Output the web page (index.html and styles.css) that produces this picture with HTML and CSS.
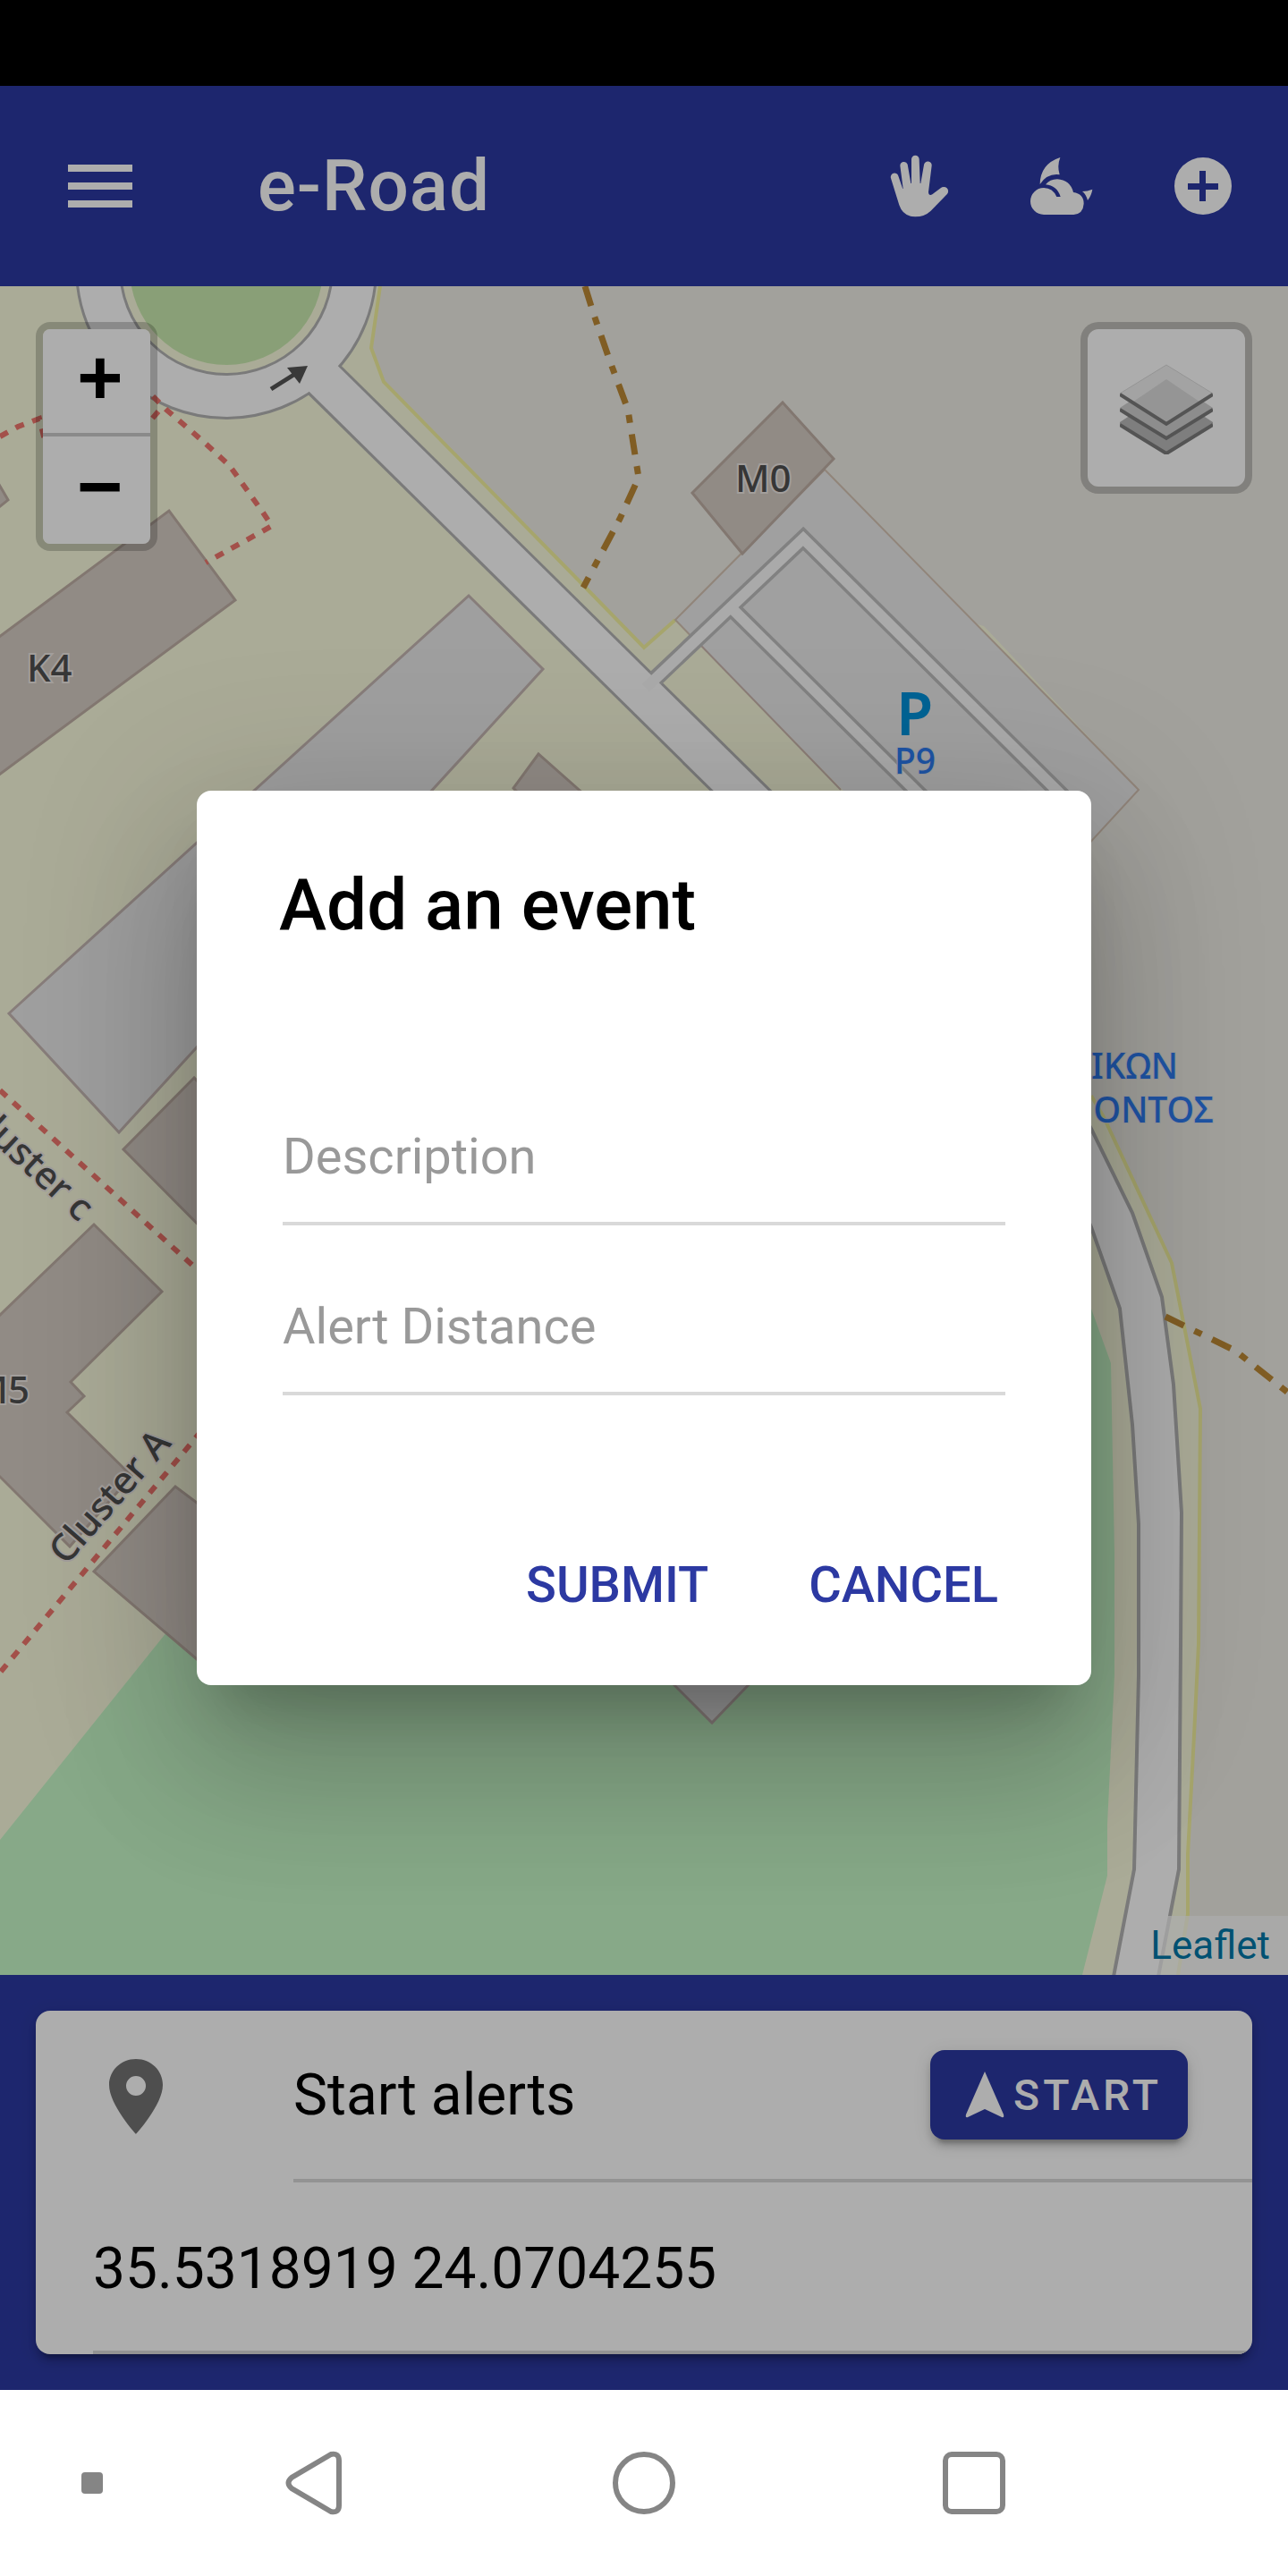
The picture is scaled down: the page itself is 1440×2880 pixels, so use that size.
FILE: index.html
```html
<!DOCTYPE html>
<html lang="en">
<head>
<meta charset="utf-8">
<meta name="viewport" content="width=device-width, initial-scale=1">
<title>e-Road</title>
<link rel="stylesheet" href="styles.css">
</head>
<body>
<div class="status-bar"></div>
<div class="app">
  <header class="toolbar">
    <button class="icon-button" aria-label="Menu">
      <svg class="icon" viewBox="0 0 72 72" fill="currentColor"><path d="M0 12h72v8H0zM0 32h72v8H0zM0 52h72v8H0z"/></svg>
    </button>
    <h1 class="toolbar-title">e-Road</h1>
    <div class="toolbar-actions">
      <button class="icon-button" aria-label="Hand">
        <svg class="icon" viewBox="100 96 216 216" fill="currentColor"><path d="M109 178A13 13 0 0 1 134 170L149 214L150 212L140 136A13 13 0 0 1 165 131L176 195H178V114A13 13 0 0 1 204 114L207 195H209L220 133A13 13 0 0 1 246 136L235 224Q236 238 248 232L276 211A14 14 0 0 1 297 232L243 287Q222 307 191 307Q150 307 137 268Z"/></svg>
      </button>
      <button class="icon-button" aria-label="Night weather">
        <svg class="icon" viewBox="572 96 216 216" fill="currentColor"><path d="M675 108Q664 137 673 166Q632 160 607 198Q608 130 675 108ZM749 222Q766 222 783 215Q780 235 767 252Q762 232 749 222ZM620 300A45 45 0 0 1 620 210Q650 210 663 240H676Q664 202 626 199Q640 181 665 181Q708 183 719 225Q754 230 754 263Q752 297 720 300Z"/></svg>
      </button>
      <button class="icon-button" aria-label="Add event">
        <svg class="icon" viewBox="0 0 72 72" fill="currentColor"><path fill-rule="evenodd" d="M36 4a32 32 0 1 0 0 64a32 32 0 1 0 0-64zM32 19h7v14h14v7H39v13h-7V40H19v-7h13z"/></svg>
      </button>
    </div>
  </header>

  <main class="map">
    <svg class="map-canvas" viewBox="0 320 1440 1888" preserveAspectRatio="xMidYMid slice" aria-label="Map">
      <rect class="campus" y="320" width="1440" height="1888"/>
      <path class="land" d="M425 320L415 389L429 427L647 649L720 724L755 693L830 620L1100 700L1273 883L1220 935V1225L1234 1249L1310 1412L1321 1468L1342 1575L1340 1838L1335 1940L1328 2073V2140L1317 2208H1440V320Z"/>
      <path class="land-edge" d="M425 320L415 389L429 427L647 649L720 724L755 693M1220 1225L1234 1249L1310 1412L1321 1468L1342 1575L1340 1838L1335 1940L1328 2073V2140L1317 2208"/>
      <path class="park" d="M195 1814L0 2057V2208H1210L1238 2097V2040L1246 1873V1736L1242 1524L1220 1463L1000 1300Z"/>

      <path class="lot" d="M922 525L1273 883L1110 1060L755 693Z"/>
      <path class="campus" d="M784 722L740 765L980 1000L1040 983Z"/>
      <path class="lot-edge" d="M784 722L940 883"/>

      <path class="plain-building" d="M524 666L607 748L133 1266L10 1133Z"/>
      <path class="plain-building" d="M740 1870L796 1926L850 1870Z"/>
      <g class="building">
        <path d="M875 450L932 513L830 619L774 551Z"/>
        <path d="M-5 715L189 571L263 671L-5 869Z"/>
        <path d="M-5 535L9 559L-5 570Z"/>
        <path d="M602 843L574 881L650 960L680 912Z"/>
        <path d="M217 1205L138 1285L260 1408L300 1290Z"/>
        <path d="M105 1369L181 1444L79 1545L94 1561L75 1579L147 1650L78 1729L-5 1646V1475Z"/>
        <path d="M196 1662L105 1757L240 1872V1695Z"/>
      </g>

      <circle class="grass" cx="253" cy="300" r="108"/>
      <circle class="ring-casing" cx="253" cy="300" r="143"/>
      <path class="road-casing" d="M361 423L870 925"/>
      <path class="lane-casing" d="M725 766L898 602L1200 902M817 679L1060 920"/>
      <circle class="ring" cx="253" cy="300" r="143"/>
      <path class="road" d="M345 407L870 925"/>
      <path class="lane" d="M722 769L898 602L1200 902M817 679L1060 920"/>
      <path class="bend" d="M1180 1190L1220 1262L1266 1356L1299 1450L1312 1548L1321 1691L1320 1840L1318 2090L1294 2215H1244L1268 2090L1273 1873V1704L1266 1593L1252 1463L1220 1372L1180 1280Z"/>
      <path class="arrow-line" d="M303 435L330 418"/>
      <path class="arrow-head" d="M344 409L321 411L335 429Z"/>

      <g class="footway">
        <path d="M0 488L20 477L44 468L50 492M177 460L165 474"/>
        <path d="M171 443L186 458L230 496L257 521L294 573L304 588L230 629"/>
        <path d="M0 1219L230 1428"/>
        <path d="M225 1600L0 1870"/>
      </g>
      <g class="track">
        <path d="M654 320L664 352L682 404L702 458L714 534L693 580L652 657"/>
        <path d="M1303 1472L1344 1492L1381 1510L1440 1557"/>
      </g>

      <g class="map-label">
        <text x="822" y="550">M0</text>
        <text x="30" y="762">K4</text>
        <text x="33" y="1569" text-anchor="end">M5</text>
        <text transform="translate(88 1367) rotate(43)" text-anchor="end">Cluster c</text>
        <text transform="translate(74 1751) rotate(-49)">Cluster A</text>
      </g>
      <text class="parking-symbol" x="1002" y="822">P</text>
      <g class="place-label">
        <text x="1000" y="865">P9</text>
        <text x="1317" y="1206" text-anchor="end">ΙΚΩΝ</text>
        <text x="1357" y="1255" text-anchor="end">ΟΝΤΟΣ</text>
      </g>
    </svg>

    <div class="zoom-control">
      <button class="zoom-button" aria-label="Zoom in">+</button>
      <button class="zoom-button" aria-label="Zoom out">−</button>
    </div>
    <button class="layers-control" aria-label="Layers">
      <svg class="layers-icon" viewBox="0 0 104 104">
        <path fill="#bababa" d="M0 68L52 34L104 68V71L52 104L0 71Z"/>
        <path class="layer-edge" d="M0 71L52 103L104 71"/>
        <path fill="#d0d0d0" d="M0 52L52 18L104 52V55L52 87L0 55Z"/>
        <path class="layer-edge" d="M0 54L52 86L104 54"/>
        <path fill="#f1f1f1" stroke="#dadada" stroke-width="1" d="M0 36L52 4L104 36L52 70Z"/>
        <path fill="#dcdcdc" d="M15 45L52 20L89 45L52 69Z"/>
        <path class="layer-edge" d="M0 37L52 70L104 37"/>
      </svg>
    </button>
    <div class="attribution"><a href="#">Leaflet</a></div>
  </main>

  <section class="panel">
    <div class="card">
      <div class="row">
        <svg class="pin" viewBox="0 0 96 96" fill="currentColor"><path fill-rule="evenodd" d="M48 6C31 6 18 19 18 35C18 57 48 90 48 90S78 57 78 35C78 19 65 6 48 6ZM48 25a11 11 0 1 1 0 22a11 11 0 1 1 0-22z"/></svg>
        <div class="row-content row-content-action">
          <span>Start alerts</span>
          <button class="start-button">
            <svg class="start-icon" viewBox="0 0 48 56" fill="currentColor"><path d="M24 2L45 50Q46 54 43 53L24 44L5 53Q2 54 3 50Z"/></svg>START
          </button>
        </div>
      </div>
      <div class="row">
        <div class="row-content">35.5318919 24.0704255</div>
      </div>
    </div>
  </section>

  <div class="backdrop">
    <form class="dialog" role="dialog" aria-labelledby="dialog-title">
      <h2 class="dialog-title" id="dialog-title">Add an event</h2>
      <div class="fields">
        <input class="field" type="text" placeholder="Description" aria-label="Description">
        <input class="field" type="text" placeholder="Alert Distance" aria-label="Alert Distance">
      </div>
      <div class="dialog-actions">
        <button class="text-button" type="button">SUBMIT</button>
        <button class="text-button" type="button">CANCEL</button>
      </div>
    </form>
  </div>
</div>

<nav class="system-nav" aria-label="System">
  <span class="nav-dot"></span>
  <button class="nav-button" aria-label="Back"><svg class="nav-icon" viewBox="0 0 72 72"><path d="M55 4L11 30Q4 36 11 42L55 68Q64 70 64 61V11Q64 2 55 4Z"/></svg></button>
  <button class="nav-button" aria-label="Home"><svg class="nav-icon" viewBox="0 0 72 72"><circle cx="36" cy="36" r="32"/></svg></button>
  <button class="nav-button" aria-label="Recent apps"><svg class="nav-icon" viewBox="0 0 72 72"><rect x="4" y="4" width="64" height="64" rx="7"/></svg></button>
</nav>
</body>
</html>
```
FILE: styles.css
```css
* { box-sizing: border-box; }

body {
  margin: 0;
  min-height: 100vh;
  display: flex;
  flex-direction: column;
  background: #fff;
  color: #000;
  font-family: Roboto, "Liberation Sans", sans-serif;
}

button {
  margin: 0;
  padding: 0;
  border: 0;
  background: none;
  color: inherit;
  font: inherit;
}

h1, h2 { margin: 0; font-weight: 500; }

svg { display: block; }

.status-bar { height: 96px; background: #000; }

.app {
  position: relative;
  flex: 1;
  display: flex;
  flex-direction: column;
}

/* Toolbar */
.toolbar {
  height: 224px;
  padding: 0 59px 0 76px;
  display: flex;
  align-items: center;
  background: #2c39a2;
  color: #fff;
}
.toolbar-title { margin-left: 140px; font-size: 80px; line-height: 96px; letter-spacing: 1px; }
.toolbar-actions { margin-left: auto; display: flex; gap: 86px; }
.icon-button, .icon { width: 72px; height: 72px; }

/* Map */
.map { position: relative; flex: 1; overflow: hidden; }
.map-canvas { position: absolute; inset: 0; width: 100%; height: 100%; }
.campus { fill: #fbfddf; }
.land { fill: #efede6; }
.land-edge { fill: none; stroke: #f5f3a0; stroke-width: 4; }
.park { fill: #c8f9c9; }
.grass { fill: #cbebb0; }
.lot { fill: #ececec; stroke: #d6c4b4; stroke-width: 2; }
.lot-edge { fill: none; stroke: #cdb8b0; stroke-width: 2; }
.plain-building { fill: #ebebeb; stroke: #c8b8b4; stroke-width: 3; }
.building { fill: #d6cdc5; stroke: #c0b0a6; stroke-width: 3; }
.ring-casing { fill: none; stroke: #b4b4b4; stroke-width: 52; }
.ring { fill: none; stroke: #fff; stroke-width: 46; }
.road-casing { fill: none; stroke: #b4b4b4; stroke-width: 49; }
.road { fill: none; stroke: #fff; stroke-width: 43; }
.lane-casing { fill: none; stroke: #bfbfbf; stroke-width: 19; }
.lane { fill: none; stroke: #fbfbfb; stroke-width: 12; }
.bend { fill: #fff; stroke: #b4b4b4; stroke-width: 4; }
.arrow-line { stroke: #555; stroke-width: 5; }
.arrow-head { fill: #555; }
.footway { fill: none; stroke: #f0776e; stroke-width: 6; stroke-dasharray: 10 10; }
.track { fill: none; stroke: #bd8a35; stroke-width: 7; stroke-dasharray: 23 13 9 13; }
.map-label, .place-label {
  font-family: "Noto Sans", sans-serif;
  font-weight: 500;
  paint-order: stroke;
  stroke: #efe9e5;
  stroke-width: 4;
}
.map-label { font-size: 42px; fill: #505050; }
.place-label { font-size: 39px; fill: #2e7df4; stroke: #dfe2ea; stroke-width: 2; }
.parking-symbol { font: 600 67px "Noto Sans", sans-serif; fill: #0092da; }

.zoom-control {
  position: absolute;
  top: 40px;
  left: 40px;
  display: flex;
  flex-direction: column;
  border: 8px solid rgba(0, 0, 0, .2);
  border-radius: 16px;
  background-clip: padding-box;
}
.zoom-button {
  width: 120px;
  height: 120px;
  padding: 6px 0 0 8px;
  background: #fff;
  font: 700 88px/110px "Liberation Mono", monospace;
}
.zoom-button:first-child { border-bottom: 4px solid #ccc; border-radius: 8px 8px 0 0; }
.zoom-button:last-child { border-radius: 0 0 8px 8px; }
.layers-control {
  position: absolute;
  top: 40px;
  right: 40px;
  padding: 36px;
  border: 8px solid rgba(0, 0, 0, .2);
  border-radius: 20px;
  background: #fff;
  background-clip: padding-box;
}
.layers-icon { width: 104px; height: 104px; }
.layer-edge { fill: none; stroke: #7c7c7c; stroke-width: 4; }
.attribution {
  position: absolute;
  right: 0;
  bottom: 0;
  padding: 0 20px;
  background: rgba(255, 255, 255, .7);
  font-size: 44px;
  line-height: 66px;
}
.attribution a { color: #0078a8; text-decoration: none; }

/* Bottom panel */
.panel { padding: 40px; background: #2c39a2; }
.card {
  border-radius: 16px;
  background: #fff;
  overflow: hidden;
  box-shadow: 0 12px 4px -8px rgba(0, 0, 0, .2), 0 8px 8px rgba(0, 0, 0, .14), 0 4px 20px rgba(0, 0, 0, .12);
}
.row { display: flex; align-items: center; padding-left: 64px; font-size: 64px; }
.pin { width: 96px; height: 96px; margin-right: 128px; color: #747474; }
.row-content {
  flex: 1;
  height: 192px;
  padding-right: 72px;
  display: flex;
  align-items: center;
  justify-content: space-between;
  box-shadow: inset 0 -4px #d9d9d9;
}
.row-content-action { padding-bottom: 4px; }
.start-button {
  height: 100px;
  width: 288px;
  padding-left: 8px;
  display: flex;
  align-items: center;
  justify-content: center;
  gap: 8px;
  border-radius: 16px;
  background: #2c39a2;
  color: #fff;
  font-size: 48px;
  font-weight: 500;
  letter-spacing: 4px;
  box-shadow: 0 12px 4px -8px rgba(0, 0, 0, .2), 0 8px 8px rgba(0, 0, 0, .14), 0 4px 20px rgba(0, 0, 0, .12);
}
.start-icon { width: 48px; height: 56px; }

/* Dialog */
.backdrop {
  position: absolute;
  inset: 0;
  display: flex;
  align-items: center;
  justify-content: center;
  overflow: hidden;
  background: rgba(0, 0, 0, .32);
}
.dialog {
  width: 1000px;
  padding: 80px 96px;
  border-radius: 16px;
  background: #fff;
  box-shadow: 0 44px 60px -28px rgba(0, 0, 0, .2), 0 96px 152px 12px rgba(0, 0, 0, .14), 0 36px 184px 32px rgba(0, 0, 0, .12);
}
.dialog-title { margin-left: -4px; font-size: 80px; line-height: 96px; }
.fields { display: flex; flex-direction: column; gap: 40px; margin-top: 160px; }
.field {
  width: 100%;
  height: 150px;
  padding: 0;
  border: 0;
  border-bottom: 4px solid #d9d9d9;
  border-radius: 0;
  background: none;
  font: 400 56px Roboto, "Liberation Sans", sans-serif;
}
.field::placeholder { color: #999; opacity: 1; }
.dialog-actions { display: flex; justify-content: flex-end; gap: 112px; margin-top: 180px; padding-right: 8px; }
.text-button { color: #2c39a2; font-size: 56px; font-weight: 500; line-height: 64px; }

/* System navigation */
.system-nav {
  height: 208px;
  display: grid;
  grid-template-columns: 1fr repeat(3, 369px) 1fr;
  align-items: center;
}
.nav-dot { justify-self: end; width: 24px; height: 24px; margin-right: 52px; border-radius: 4px; background: #858585; }
.nav-button { display: flex; justify-content: center; }
.nav-icon { width: 72px; height: 72px; fill: none; stroke: #858585; stroke-width: 6; }
```
